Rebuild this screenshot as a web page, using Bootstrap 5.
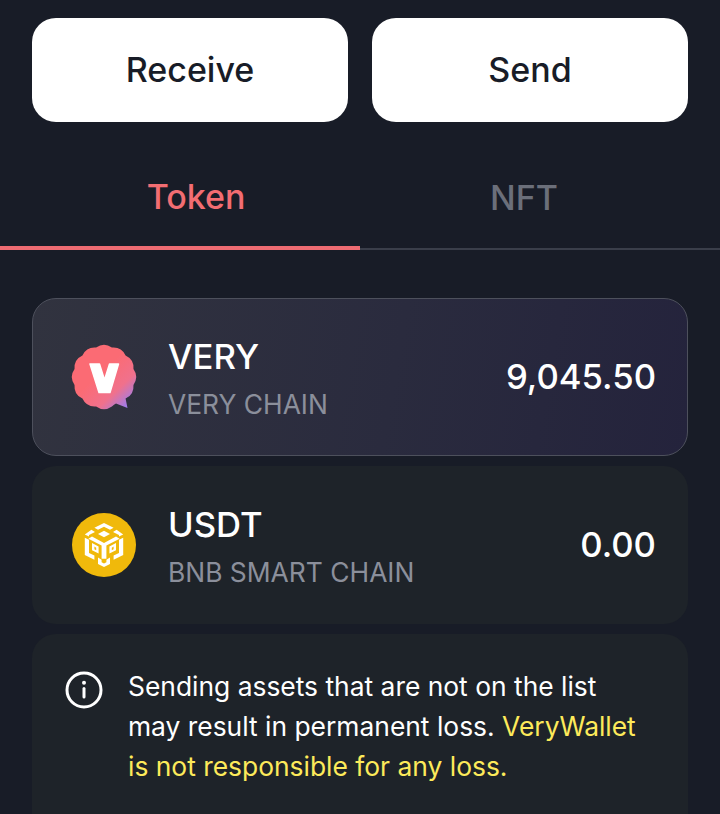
<!DOCTYPE html>
<html lang="en">
<head>
  <meta charset="UTF-8" />
  <title>VeryWallet</title>
  <link href="https://cdn.jsdelivr.net/npm/bootstrap@5.3.3/dist/css/bootstrap.min.css" rel="stylesheet" />
  <style>
    html, body { height: 814px; overflow: hidden; }
    body { background: #181c27; font-family: "Inter", "Liberation Sans", sans-serif; color: #fff; }
    .wallet-actions { padding: 18px 32px 0; gap: 24px; }
    .wallet-btn { flex: 1 1 0; height: 104px; border-radius: 24px; background: #fff; border: 0; color: #181c27; font-size: 34px; font-weight: 500; padding: 0 0 2px; }
    .wallet-tabs { margin-top: 18px; height: 110px; }
    .wallet-tab { flex: 1 1 0; font-size: 34px; font-weight: 500; color: #6b6f7a; border-bottom: 2px solid #3a3e4a; padding: 6px 32px 0 0; display: flex; align-items: center; justify-content: center; }
    .wallet-tab.on { color: #f26d72; border-bottom: 4px solid #ee6b72; padding: 6px 0 0 32px; }
    .asset-list { padding: 48px 32px 0; gap: 10px; }
    .asset-row { height: 158px; border-radius: 24px; background: #1e2329; padding: 0 32px 0 40px; gap: 32px; }
    .asset-row.picked { background: linear-gradient(100deg, #31333f 0%, #2a2b3e 55%, #24233c 100%); border: 1px solid #4d505c; padding: 0 31px 0 39px; }
    .asset-icon { width: 64px; height: 64px; flex: none; display: block; overflow: visible; }
    .asset-text { padding-top: 4px; }
    .asset-name { font-size: 34.67px; font-weight: 500; line-height: 40px; }
    .asset-chain { font-size: 26.4px; line-height: 36px; color: #8b8f9b; margin-top: 10px; }
    .asset-amount { font-size: 34.67px; font-weight: 500; margin-left: auto; margin-bottom: 2px; }
    .notice { border-radius: 24px; background: #1e2329; padding: 32px 32px 60px 32px; gap: 24px; font-size: 26.4px; line-height: 40px; }
    .notice-icon { width: 40px; height: 40px; flex: none; margin-top: 4px; }
    .notice-warn { color: #fdea5a; }
  </style>
</head>
<body>
  <div class="d-flex wallet-actions">
    <button class="wallet-btn">Receive</button>
    <button class="wallet-btn">Send</button>
  </div>

  <div class="d-flex wallet-tabs">
    <div class="wallet-tab on">Token</div>
    <div class="wallet-tab">NFT</div>
  </div>

  <div class="d-flex flex-column asset-list">
    <div class="d-flex align-items-center asset-row picked">
      <svg class="asset-icon" viewBox="0 0 64 64">
        <defs>
          <linearGradient id="veryGrad" gradientUnits="userSpaceOnUse" x1="26" y1="30" x2="56" y2="62">
            <stop offset="0" stop-color="#fb6b74" />
            <stop offset="0.55" stop-color="#f0718c" />
            <stop offset="1" stop-color="#9a7df0" />
          </linearGradient>
        </defs>
        <path fill="url(#veryGrad)" d="M61.460 24.110 Q67 32 61.460 39.890 Q62.310 49.500 53.570 53.570 L55.500 63 L44 58.500 Q42 59.500 39.890 61.460 Q32 67 24.110 61.460 Q14.500 62.310 10.430 53.570 Q1.690 49.500 2.540 39.890 Q-3 32 2.540 24.110 Q1.690 14.500 10.430 10.430 Q14.500 1.690 24.110 2.540 Q32 -3 39.890 2.540 Q49.500 1.690 53.570 10.430 Q62.310 14.500 61.460 24.110 Z" />
        <path fill="#fff" stroke="#fff" stroke-width="1.500" stroke-linejoin="round" d="M18 19 H27.500 L32.500 35 L37.500 19 H46.500 L38 47.500 H27 Z" />
      </svg>
      <div class="asset-text">
        <div class="asset-name">VERY</div>
        <div class="asset-chain">VERY CHAIN</div>
      </div>
      <div class="asset-amount">9,045.50</div>
    </div>

    <div class="d-flex align-items-center asset-row">
      <svg class="asset-icon" viewBox="0 0 64 64">
        <circle cx="32" cy="32" r="32" fill="#f0b90b" />
        <g fill="#fff" transform="translate(32 32) scale(1.200 1.050) translate(-32 -31)">
          <path d="M32 10 L40 14.500 L37 16.500 L32 13.500 L27 16.500 L24 14.500 Z" />
          <path d="M32 17.500 L37 20.500 L32 23.500 L27 20.500 Z" />
          <path d="M21.500 16.500 L24.500 18.500 L19.500 21.500 L19.500 23 L16 21 Z" />
          <path d="M42.500 16.500 L48 21 L44.500 23 L44.500 21.500 L39.500 18.500 Z" />
          <path d="M22 23 L32 29 L42 23 L45 25 L34 31.500 V44 L30 44 V31.500 L19 25 Z" />
          <path d="M16 24 L19.500 26 V38.500 L24 41 V45 L16 40.500 Z" />
          <path d="M48 24 V40.500 L40 45 V41 L44.500 38.500 V26 Z" />
          <path d="M22 29 L27.500 32.500 V39 L22 36 Z M24 32.500 V35 L25.500 36 V33.500 Z" fill-rule="evenodd" />
          <path d="M42 29 V36 L36.500 39 V32.500 Z M40 32.500 L38.500 33.500 V36 L40 35 Z" fill-rule="evenodd" />
          <path d="M27 43 L30 45 V47.500 L32 48.500 L34 47.500 V45 L37 43 V49 L32 52 L27 49 Z" />
        </g>
      </svg>
      <div class="asset-text">
        <div class="asset-name">USDT</div>
        <div class="asset-chain">BNB SMART CHAIN</div>
      </div>
      <div class="asset-amount">0.00</div>
    </div>

    <div class="d-flex notice">
      <svg class="notice-icon" viewBox="0 0 40 40">
        <circle cx="20" cy="20" r="17" fill="none" stroke="#fff" stroke-width="3" />
        <circle cx="20" cy="12.800" r="2" fill="#fff" />
        <rect x="18.500" y="17" width="3" height="11.500" rx="1.500" fill="#fff" />
      </svg>
      <div>Sending assets that are not on the list may result in permanent loss. <span class="notice-warn">VeryWallet is not responsible for any loss.</span></div>
    </div>
  </div>

  <script src="https://cdn.jsdelivr.net/npm/bootstrap@5.3.3/dist/js/bootstrap.bundle.min.js"></script>
</body>
</html>
